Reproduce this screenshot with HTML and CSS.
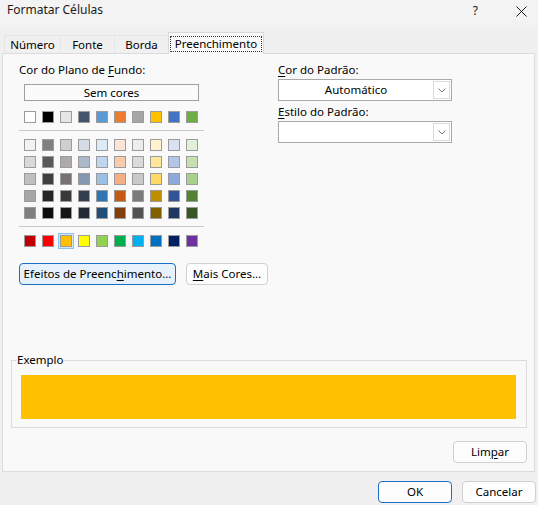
FILE: index.html
```html
<!DOCTYPE html>
<html lang="pt-BR">
<head>
    <meta charset="UTF-8">
    <title>Formatar Células</title>
    <link rel="stylesheet" href="styles.css">
</head>
<body>
<div class="dialog">
    <div class="titlebar">
        <span class="title">Formatar Células</span>
        <div class="title-buttons">
            <span class="help">?</span>
            <svg class="close" width="11" height="11" viewBox="0 0 11 11">
                <path d="M0.5 0.5 L10.5 10.5 M10.5 0.5 L0.5 10.5" stroke="#1a1a1a" stroke-width="1" fill="none"/>
            </svg>
        </div>
    </div>

    <div class="tabs">
        <div class="tab tab-num">Número</div>
        <div class="tab tab-font">Fonte</div>
        <div class="tab tab-border">Borda</div>
        <div class="tab tab-fill active"><span class="focus">Preenchimento</span></div>
    </div>

    <div class="panel">
        <div class="columns">
            <div class="bg-col">
                <div class="label">Cor do Plano de <u>F</u>undo:</div>
                <button class="no-color">Sem cores</button>

                <div class="swatch-row">
                    <span class="swatch" style="background:#ffffff"></span>
                    <span class="swatch" style="background:#000000"></span>
                    <span class="swatch" style="background:#e7e6e6"></span>
                    <span class="swatch" style="background:#44546a"></span>
                    <span class="swatch" style="background:#5b9bd5"></span>
                    <span class="swatch" style="background:#ed7d31"></span>
                    <span class="swatch" style="background:#a5a5a5"></span>
                    <span class="swatch" style="background:#ffc000"></span>
                    <span class="swatch" style="background:#4472c4"></span>
                    <span class="swatch" style="background:#70ad47"></span>
                </div>
                <div class="sep"></div>

                <div class="theme-grid">
                    <span class="swatch" style="background:#f2f2f2"></span>
                    <span class="swatch" style="background:#808080"></span>
                    <span class="swatch" style="background:#d0cece"></span>
                    <span class="swatch" style="background:#d6dce4"></span>
                    <span class="swatch" style="background:#ddebf7"></span>
                    <span class="swatch" style="background:#fce4d6"></span>
                    <span class="swatch" style="background:#ededed"></span>
                    <span class="swatch" style="background:#fff2cc"></span>
                    <span class="swatch" style="background:#d9e1f2"></span>
                    <span class="swatch" style="background:#e2efda"></span>

                    <span class="swatch" style="background:#d9d9d9"></span>
                    <span class="swatch" style="background:#595959"></span>
                    <span class="swatch" style="background:#aeaaaa"></span>
                    <span class="swatch" style="background:#acb9ca"></span>
                    <span class="swatch" style="background:#bdd7ee"></span>
                    <span class="swatch" style="background:#f8cbad"></span>
                    <span class="swatch" style="background:#dbdbdb"></span>
                    <span class="swatch" style="background:#ffe699"></span>
                    <span class="swatch" style="background:#b4c6e7"></span>
                    <span class="swatch" style="background:#c6e0b4"></span>

                    <span class="swatch" style="background:#bfbfbf"></span>
                    <span class="swatch" style="background:#404040"></span>
                    <span class="swatch" style="background:#757171"></span>
                    <span class="swatch" style="background:#8497b0"></span>
                    <span class="swatch" style="background:#9bc2e6"></span>
                    <span class="swatch" style="background:#f4b084"></span>
                    <span class="swatch" style="background:#c9c9c9"></span>
                    <span class="swatch" style="background:#ffd966"></span>
                    <span class="swatch" style="background:#8ea9db"></span>
                    <span class="swatch" style="background:#a9d08e"></span>

                    <span class="swatch" style="background:#a6a6a6"></span>
                    <span class="swatch" style="background:#262626"></span>
                    <span class="swatch" style="background:#3a3838"></span>
                    <span class="swatch" style="background:#333f4f"></span>
                    <span class="swatch" style="background:#2f75b5"></span>
                    <span class="swatch" style="background:#c65911"></span>
                    <span class="swatch" style="background:#7b7b7b"></span>
                    <span class="swatch" style="background:#bf8f00"></span>
                    <span class="swatch" style="background:#305496"></span>
                    <span class="swatch" style="background:#548235"></span>

                    <span class="swatch" style="background:#808080"></span>
                    <span class="swatch" style="background:#0d0d0d"></span>
                    <span class="swatch" style="background:#171616"></span>
                    <span class="swatch" style="background:#222b35"></span>
                    <span class="swatch" style="background:#1f4e78"></span>
                    <span class="swatch" style="background:#833c0c"></span>
                    <span class="swatch" style="background:#525252"></span>
                    <span class="swatch" style="background:#806000"></span>
                    <span class="swatch" style="background:#203764"></span>
                    <span class="swatch" style="background:#375623"></span>
                </div>
                <div class="sep"></div>

                <div class="swatch-row">
                    <span class="swatch" style="background:#c00000"></span>
                    <span class="swatch" style="background:#ff0000"></span>
                    <span class="swatch selected" style="background:#ffc000"></span>
                    <span class="swatch" style="background:#ffff00"></span>
                    <span class="swatch" style="background:#92d050"></span>
                    <span class="swatch" style="background:#00b050"></span>
                    <span class="swatch" style="background:#00b0f0"></span>
                    <span class="swatch" style="background:#0070c0"></span>
                    <span class="swatch" style="background:#002060"></span>
                    <span class="swatch" style="background:#7030a0"></span>
                </div>

                <div class="btn-row">
                    <button class="btn btn-effects">Efeitos de Preenc<u>h</u>imento...</button>
                    <button class="btn btn-more"><u>M</u>ais Cores...</button>
                </div>
            </div>

            <div class="pattern-col">
                <div class="label"><u>C</u>or do Padrão:</div>
                <div class="combo">
                    <span class="combo-text">Automático</span>
                    <span class="combo-arrow">
                        <svg width="8" height="5" viewBox="0 0 8 5"><path d="M0.5 0.5 L4 4 L7.5 0.5" stroke="#777" fill="none"/></svg>
                    </span>
                </div>
                <div class="label label-style"><u>E</u>stilo do Padrão:</div>
                <div class="combo">
                    <span class="combo-text"></span>
                    <span class="combo-arrow">
                        <svg width="8" height="5" viewBox="0 0 8 5"><path d="M0.5 0.5 L4 4 L7.5 0.5" stroke="#777" fill="none"/></svg>
                    </span>
                </div>
            </div>
        </div>

        <fieldset class="sample">
            <legend>Exemplo</legend>
            <div class="sample-fill"></div>
        </fieldset>

        <div class="clear-row">
            <button class="btn">Lim<u>p</u>ar</button>
        </div>
    </div>

    <div class="footer">
        <button class="btn btn-default">OK</button>
        <button class="btn">Cancelar</button>
    </div>
</div>
</body>
</html>
```

FILE: styles.css
```css
body {
    margin: 0;
    background-color: #f0f0f0;
    font-family: "Noto Sans", "Open Sans", sans-serif;
    font-size: 11.5px;
    color: #000;
}
u {
    text-decoration-thickness: 1px;
    text-underline-offset: 2px;
}
.dialog {
    width: 538px;
    height: 505px;
    display: flex;
    flex-direction: column;
}

/* title bar */
.titlebar {
    height: 25px;
    box-sizing: border-box;
    background-color: #f3f3f3;
    display: flex;
    justify-content: space-between;
    padding: 2px 11px 0 7px;
    line-height: 16px;
    font-size: 12px;
    color: #1a1a1a;
}
.title-buttons {
    display: flex;
    align-items: center;
    gap: 38px;
    height: 16px;
    padding-top: 1px;
}

/* tabs */
.tabs {
    display: flex;
    align-items: flex-end;
    height: 22px;
    margin: 7px 0 -1px 4px;
}
.tab {
    height: 19px;
    box-sizing: border-box;
    border: 1px solid #e6e6e6;
    border-bottom: none;
    border-right: none;
    display: flex;
    align-items: center;
    justify-content: center;
    line-height: 16px;
}
.tab-num { width: 56px; }
.tab-font { width: 54px; }
.tab-border { width: 54px; }
.tab-fill { width: 96px; }
.tab.active {
    height: 22px;
    background-color: #f9f9f9;
    border: 1px solid #d9d9d9;
    border-bottom: none;
    position: relative;
    padding-top: 1px;
}
.focus {
    outline: 1px dotted #333;
    padding: 0 4px;
    line-height: 14px;
}

/* panel */
.panel {
    height: 419px;
    box-sizing: border-box;
    margin: 0 3px 0 2px;
    border: 1px solid #dcdcdc;
    background-color: #f9f9f9;
    padding: 8px 7px 8px 8px;
    display: flex;
    flex-direction: column;
}
.columns {
    display: flex;
    margin-left: 8px;
}
.bg-col {
    width: 259px;
}
.pattern-col {
    width: 174px;
}
.label {
    line-height: 16px;
}
.label-style {
    margin-top: 3px;
}

.no-color {
    display: block;
    margin: 6px 0 0 5px;
    width: 175px;
    height: 17px;
    padding: 0;
    border: 1px solid #a0a0a0;
    background-color: #fbfbfb;
    font: inherit;
    line-height: 14px;
    color: #000;
}

.swatch-row {
    display: flex;
    gap: 6px;
    margin: 10px 0 0 5px;
}
.sep + .swatch-row {
    margin-top: 8px;
}
.theme-grid {
    display: grid;
    grid-template-columns: repeat(10, 12px);
    column-gap: 6px;
    row-gap: 5px;
    margin: 8px 0 0 5px;
}
.swatch {
    display: block;
    width: 12px;
    height: 12px;
    box-sizing: border-box;
    border: 1px solid #9b9b9b;
}
.swatch.selected {
    box-shadow: 0 0 0 1px #cfe6f8, 0 0 0 2px #8cc2ee;
}
.sep {
    width: 185px;
    height: 1px;
    background-color: #c9c9c9;
    margin-top: 7px;
}

.btn-row {
    display: flex;
    gap: 10px;
    margin-top: 16px;
}
.btn {
    height: 22px;
    box-sizing: border-box;
    padding: 0;
    border: 1px solid #d0d0d0;
    border-radius: 4px;
    background-color: #fdfdfd;
    font: inherit;
    line-height: 18px;
    color: #000;
}
.btn-effects {
    width: 157px;
    border-color: #1a6fc4;
    background-color: #e6f1fb;
}
.btn-more {
    width: 82px;
}

/* combos */
.combo {
    margin-top: 1px;
    height: 22px;
    box-sizing: border-box;
    border: 1px solid #a9a9a9;
    background-color: #fff;
    display: flex;
    padding: 0 1px 0 0;
    align-items: center;
}
.combo-text {
    flex: 1;
    text-align: center;
    line-height: 16px;
}
.combo-arrow {
    width: 17px;
    height: 18px;
    box-sizing: border-box;
    border: 1px solid #dadada;
    display: flex;
    align-items: center;
    justify-content: center;
}

/* sample */
.sample {
    margin: auto 0 13px 0;
    padding: 0 10px 8px 9px;
    border: 1px solid #dcdcdc;
    min-inline-size: 0;
}
.sample legend {
    margin-left: -5px;
    padding: 0 1px;
    line-height: 16px;
}
.sample-fill {
    margin-top: 7px;
    height: 44px;
    background-color: #ffc000;
}
.clear-row {
    display: flex;
    justify-content: flex-end;
}
.clear-row .btn {
    width: 74px;
}

/* footer */
.footer {
    display: flex;
    justify-content: flex-end;
    gap: 10px;
    padding: 9px 2px 0 0;
}
.footer .btn {
    width: 74px;
}
.footer .btn-default {
    border-color: #1a6fc4;
}
```
